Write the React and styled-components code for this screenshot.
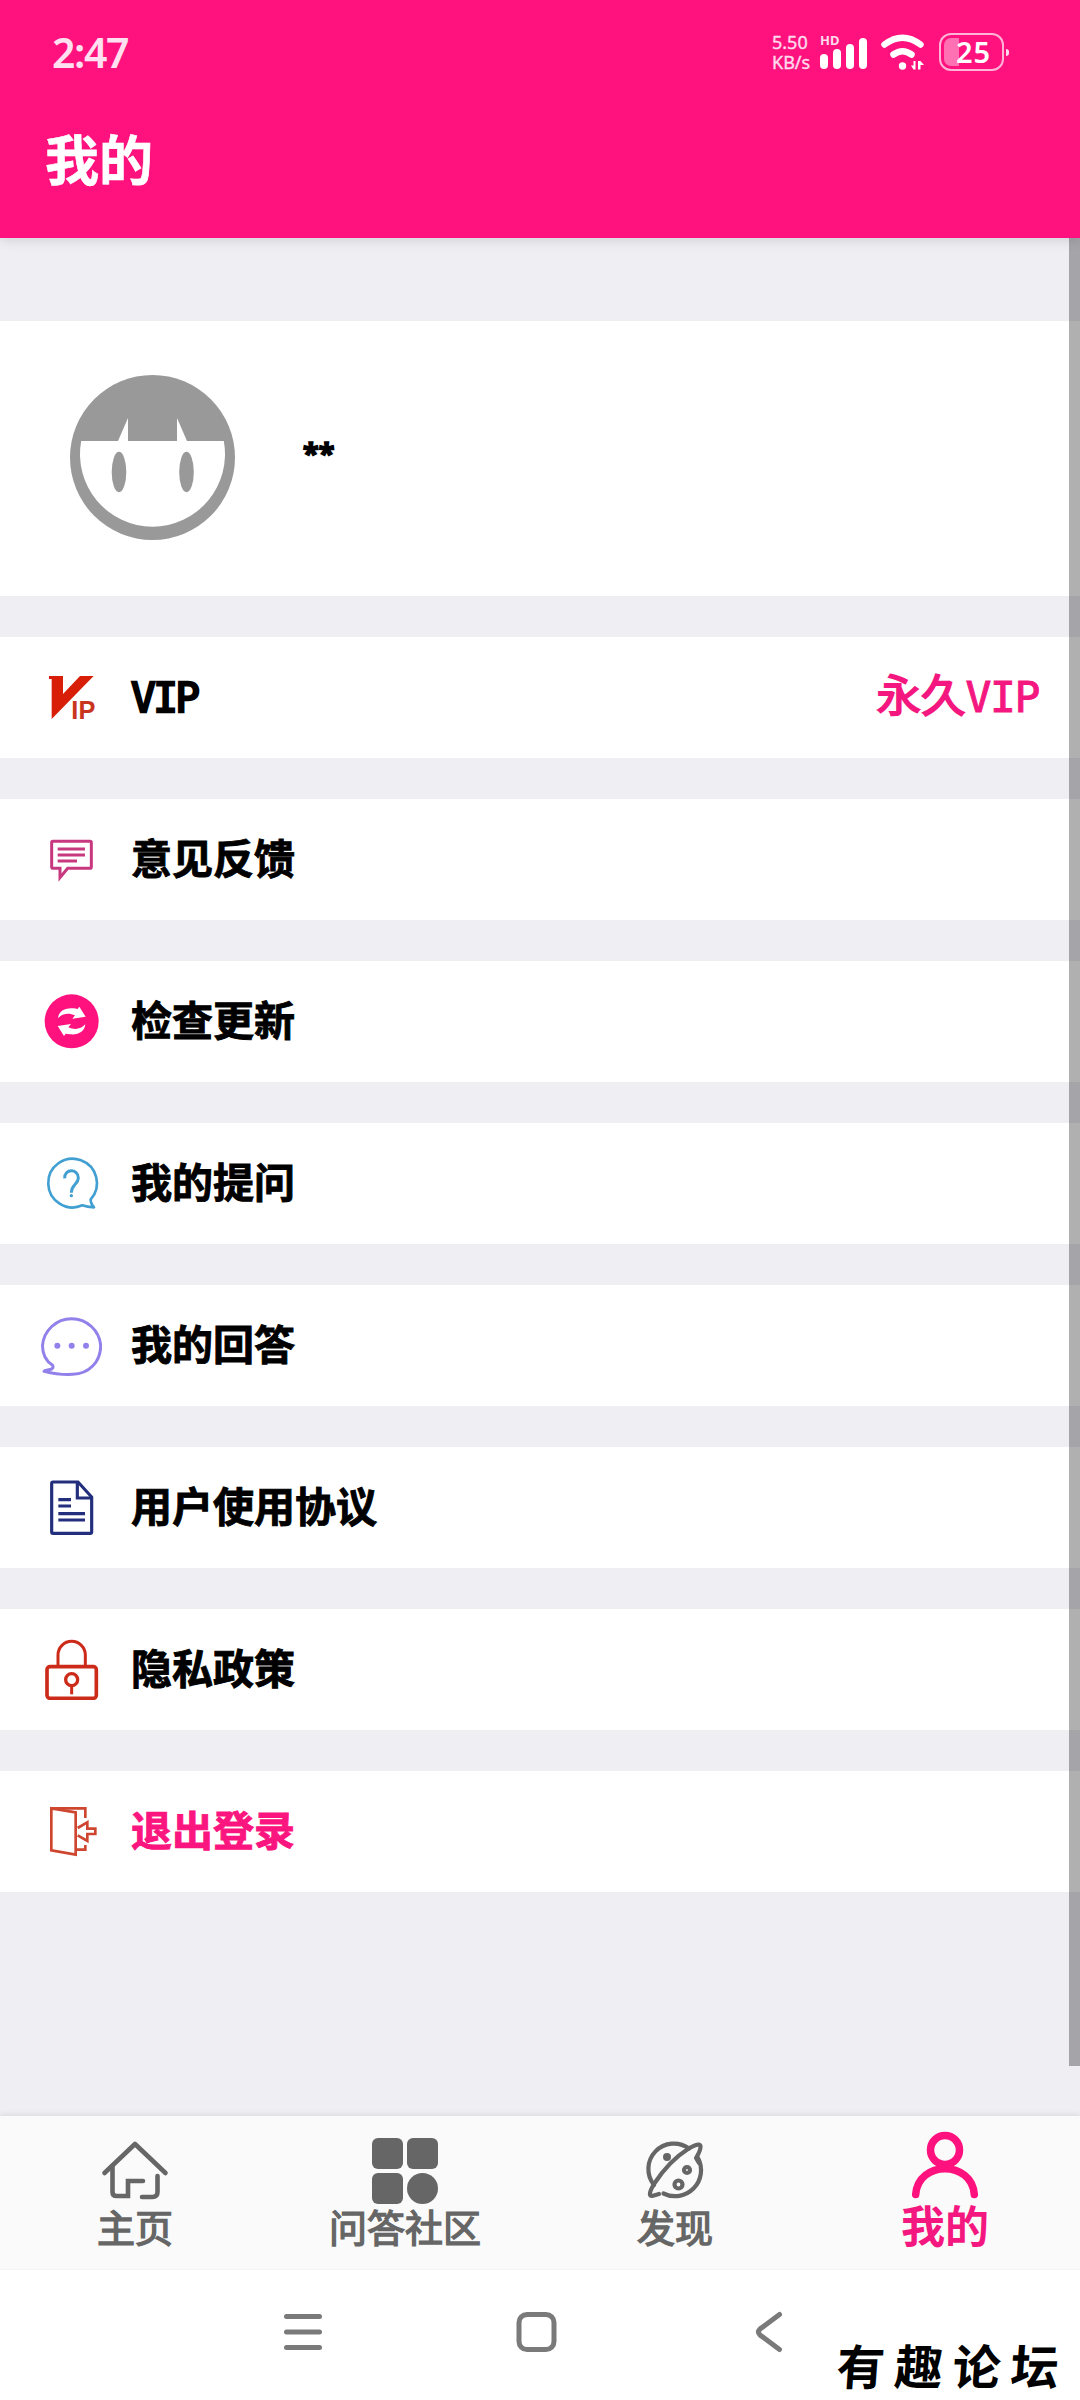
import React from 'react';
import styled, { createGlobalStyle } from 'styled-components';

const PINK = '#ff127e';

const GlobalStyle = createGlobalStyle`
  * {
    box-sizing: border-box;
  }

  body {
    margin: 0;
    background: #efeef3;
    font-family: "Noto Sans CJK SC", "Noto Sans", sans-serif;
  }
`;

/* ---------- Row icons ---------- */

const VipIcon = () => (
  <RowIcon viewBox="0 0 183 183">
    <path d="M24 27H66V81L117 27H158L32 156V36H24Z" fill="#d81e06" />
    <text
      x="91"
      y="156"
      fontSize="76"
      fontWeight="700"
      fontFamily="Liberation Sans, sans-serif"
      textLength="72"
      fill="#c9341f"
    >
      IP
    </text>
  </RowIcon>
);

const FeedbackIcon = () => (
  <RowIcon viewBox="0 0 183 183" fill="none" stroke="#c8387f" strokeWidth="9">
    <path d="M36 37H147Q151 37 151 41V114Q151 118 147 118H80L57 146V118H36Q32 118 32 114V41Q32 37 36 37Z" />
    <path d="M50 60H132M50 78H132M50 96H108" />
  </RowIcon>
);

const UpdateIcon = () => (
  <RowIcon viewBox="0 0 183 183">
    <circle cx="92" cy="91" r="81" fill={PINK} />
    <g fill="#fff">
      <path d="M51 82C53 61 70 50 96 52Q104 53 110 54L115 47L134 77L94 83L102 73C84 65 65 66 51 82Z" />
      <path
        d="M51 82C53 61 70 50 96 52Q104 53 110 54L115 47L134 77L94 83L102 73C84 65 65 66 51 82Z"
        transform="rotate(180 92 91)"
      />
    </g>
  </RowIcon>
);

const AskIcon = () => (
  <RowIcon viewBox="0 0 183 183" fill="none" stroke="#429fd2" strokeWidth="8">
    <path d="M124 157A73 73 0 1 1 149 139Q148 150 159 163Q138 162 124 157Z" strokeLinejoin="round" />
    <path d="M71 76C69 46 112 46 112 75C112 94 91 94 91 119" strokeWidth="9" />
    <circle cx="91" cy="128" r="5" fill="#429fd2" stroke="none" />
  </RowIcon>
);

const AnswerIcon = () => (
  <RowIcon viewBox="0 0 183 183" fill="none" stroke="#9281ea" strokeWidth="9">
    <path
      d="M35 151C15 138 4.500 115 4.500 92A87.500 87.500 0 0 1 179 92C179 140 145 176 95 178C65 180 38 176 9 169C12 163 42 168 35 151Z"
      strokeLinejoin="round"
    />
    <g fill="#9281ea" stroke="none">
      <circle cx="49" cy="92" r="9" />
      <circle cx="92" cy="92" r="9" />
      <circle cx="135" cy="92" r="9" />
    </g>
  </RowIcon>
);

const AgreementIcon = () => (
  <RowIcon viewBox="0 0 183 183" fill="none" stroke="#232f7c" strokeWidth="9.5">
    <path d="M36 15H111L152 60V165Q152 169 148 169H36Q32 169 32 165V19Q32 15 36 15Z" />
    <path d="M109 15V63H152" />
    <path d="M52 68H90M52 87H90M52 110H132M52 129H132" />
  </RowIcon>
);

const LockIcon = () => (
  <RowIcon viewBox="0 0 183 183" fill="none" stroke="#cc2b1a" strokeWidth="9">
    <path d="M51 81V48A41 41 0 0 1 133 48V81" />
    <rect x="18" y="83" width="148" height="95" rx="9" strokeWidth="11" />
    <circle cx="92" cy="122" r="18" strokeWidth="10" />
    <path d="M92 140V166" />
  </RowIcon>
);

const LogoutIcon = () => (
  <RowIcon viewBox="0 0 183 183" fill="none" stroke="#cf4630" strokeWidth="8">
    <path d="M31 22L104 34V161L31 148Z" />
    <path d="M31 22H133V51M104 146H133V132" />
    <path d="M110 81L139 64V83H163V99H139V120L110 103" />
  </RowIcon>
);

/* ---------- Tab icons ---------- */

const HomeIcon = () => (
  <TabIcon viewBox="0 0 80 80" fill="none" stroke="#666" strokeWidth="4.6" strokeLinecap="round">
    <path d="M9.5 45L40 16L70.500 45" strokeLinejoin="round" />
    <path d="M17.500 38V64Q17.500 68 21.500 68H33V53H48" />
    <path d="M62.500 48V64Q62.500 69 57.500 69H47" />
  </TabIcon>
);

const CommunityIcon = () => (
  <TabIcon viewBox="0 0 80 80" fill="#666">
    <rect x="7" y="10" width="31" height="31" rx="6" />
    <rect x="42" y="10" width="31" height="31" rx="6" />
    <rect x="7" y="45" width="31" height="31" rx="6" />
    <circle cx="57.5" cy="60.500" r="15.500" />
  </TabIcon>
);

const DiscoverIcon = () => (
  <TabIcon viewBox="0 0 80 80" fill="none" stroke="#666" strokeWidth="4.200" strokeLinecap="round" strokeLinejoin="round">
    <path d="M54 20.500A25.500 25.500 0 0 0 19 57" />
    <path d="M28.500 65.500A26 26 0 0 0 63 30" />
    <path d="M24 66L17 68Q12 68 19 56Q34 33 53 21Q65 14 65.500 18Q66 22 61 30L64 35" />
    <circle cx="32" cy="29" r="4" fill="#666" strokeWidth="0" />
    <circle cx="52" cy="42" r="3" />
    <circle cx="43.500" cy="56.500" r="4" />
  </TabIcon>
);

const MineIcon = () => (
  <TabIcon viewBox="0 0 80 80" fill="none" stroke={PINK} strokeWidth="7.500" strokeLinecap="round">
    <circle cx="40" cy="22" r="14.500" />
    <path d="M10.700 66.500C13 32 67 32 69.300 66.500" />
  </TabIcon>
);

const rows = [
  { label: 'VIP', icon: VipIcon, latin: true, value: true },
  { label: '意见反馈', icon: FeedbackIcon },
  { label: '检查更新', icon: UpdateIcon },
  { label: '我的提问', icon: AskIcon },
  { label: '我的回答', icon: AnswerIcon },
  { label: '用户使用协议', icon: AgreementIcon },
  { label: '隐私政策', icon: LockIcon },
  { label: '退出登录', icon: LogoutIcon, danger: true },
];

const tabs = [
  { label: '主页', icon: HomeIcon },
  { label: '问答社区', icon: CommunityIcon },
  { label: '发现', icon: DiscoverIcon },
  { label: '我的', icon: MineIcon, active: true },
];

const StatusBar = () => (
  <StatusRow>
    <Clock>2:47</Clock>
    <StatusRight>
      <NetSpeed>
        <span>5.50</span>
        <span>KB/s</span>
      </NetSpeed>
      <Signal>
        <HdTag>HD</HdTag>
        <SignalBar $h={15} />
        <SignalBar $h={20} />
        <SignalBar $h={25} />
        <SignalBar $h={31} />
      </Signal>
      <svg width="44" height="36" viewBox="0 0 44 36">
        <g fill="none" stroke="#fff" strokeWidth="6.500" strokeLinecap="round">
          <path d="M3.500 10.500Q21.500 -3 39.500 10.500" />
          <path d="M12.500 20.500Q21.500 14 30.500 20.500" />
        </g>
        <circle cx="21.500" cy="32" r="3.700" fill="#fff" />
        <path d="M34.500 27V35.500H32.500L30 31.500H32.500V27ZM37 35.500V27H39.500L43 31H39.500V35.500Z" fill="#fff" />
      </svg>
      <BatteryWrap>
        <Battery>
          <BatteryFill />
          <BatteryText>25</BatteryText>
        </Battery>
        <BatteryTip />
      </BatteryWrap>
    </StatusRight>
  </StatusRow>
);

const App = () => {
  return (
    <Page>
      <GlobalStyle />

      <Header>
        <StatusBar />
        <Title>我的</Title>
      </Header>

      <Content>
        <Profile>
          <svg width="165" height="165" viewBox="0 0 165 165">
            <circle cx="82.500" cy="82.500" r="82.500" fill="#999" />
            <path d="M11.200 66H48L58 43V66H107V43L117 66H153.800A72.500 72.500 0 1 1 11.200 66Z" fill="#fff" />
            <ellipse cx="49" cy="97" rx="7.300" ry="20.300" fill="#999" />
            <ellipse cx="116.500" cy="97" rx="7.300" ry="20.300" fill="#999" />
          </svg>
          <UserName>**</UserName>
        </Profile>

        {rows.map(({ label, icon: Icon, latin, value, danger }) => (
          <Row key={label}>
            <Icon />
            <RowLabel $latin={latin} $danger={danger}>{label}</RowLabel>
            {value && (
              <RowValue>
                永久<span>VIP</span>
              </RowValue>
            )}
          </Row>
        ))}

        <ScrollThumb />
      </Content>

      <TabBar>
        {tabs.map(({ label, icon: Icon, active }) => (
          <Tab key={label} $active={active}>
            <Icon />
            <span>{label}</span>
          </Tab>
        ))}
      </TabBar>

      <SystemNav>
        <svg width="40" height="42" viewBox="0 0 40 42" stroke="#7a7a7a" strokeWidth="5" strokeLinecap="round">
          <path d="M3.500 5.500H36.500M3.500 21H36.500M3.500 36.500H36.500" />
        </svg>
        <svg width="42" height="42" viewBox="0 0 42 42" fill="none" stroke="#7a7a7a" strokeWidth="5">
          <rect x="3" y="3.500" width="35" height="35" rx="8" />
        </svg>
        <svg width="40" height="42" viewBox="0 0 40 42" fill="none" stroke="#7a7a7a" strokeWidth="5" strokeLinecap="round">
          <path d="M29.500 3.500L10 18Q7 21 10 24L29.500 38.500" />
        </svg>
        <Watermark>有趣论坛</Watermark>
      </SystemNav>
    </Page>
  );
};

const Page = styled.div`
  width: 1080px;
  height: 2400px;
  display: flex;
  flex-direction: column;
  overflow: hidden;
  background: #efeef3;
`;

const Header = styled.header`
  position: relative;
  z-index: 1;
  flex: none;
  height: 238px;
  background: ${PINK};
  color: #fff;
  box-shadow: 0 2px 12px rgba(0, 0, 0, 0.13);
`;

const StatusRow = styled.div`
  height: 104px;
  padding: 0 71px 0 52px;
  display: flex;
  align-items: center;
  justify-content: space-between;
`;

const Clock = styled.div`
  font-family: "Noto Sans", sans-serif;
  font-size: 41px;
  font-weight: 600;
  letter-spacing: -1.4px;
  color: #ffe0f0;
`;

const StatusRight = styled.div`
  display: flex;
  align-items: center;
`;

const NetSpeed = styled.div`
  width: 48px;
  display: flex;
  flex-direction: column;
  font-family: "Noto Sans", sans-serif;
  font-size: 18px;
  line-height: 20px;
  color: #ffd9ec;
  -webkit-text-stroke: 0.4px currentColor;
  white-space: nowrap;
`;

const Signal = styled.div`
  position: relative;
  width: 47px;
  height: 34px;
  margin-right: 14px;
  display: flex;
  align-items: flex-end;
  gap: 5px;
`;

const HdTag = styled.span`
  position: absolute;
  top: 0;
  left: 0;
  font-family: "Noto Sans", sans-serif;
  font-size: 13px;
  line-height: 11px;
  font-weight: 700;
  color: #ffd9ec;
`;

const SignalBar = styled.i`
  width: 8px;
  height: ${({ $h }) => $h}px;
  border-radius: 4px;
  background: #fff;
`;

const BatteryWrap = styled.div`
  margin-left: 14px;
  display: flex;
  align-items: center;
  gap: 2px;
`;

const Battery = styled.div`
  position: relative;
  width: 65px;
  height: 38px;
  border: 2px solid #ffb3d7;
  border-radius: 12px;
  display: flex;
  align-items: center;
  padding: 0 3px;
`;

const BatteryFill = styled.div`
  width: 15px;
  height: 28px;
  border-radius: 7px 0 0 7px;
  background: #ff71b2;
`;

const BatteryText = styled.span`
  position: absolute;
  inset: 0;
  padding-left: 4px;
  text-align: center;
  font-family: "Noto Sans", sans-serif;
  font-size: 29px;
  line-height: 34px;
  font-weight: 600;
  letter-spacing: 1px;
`;

const BatteryTip = styled.div`
  width: 3px;
  height: 7px;
  border-radius: 0 3px 3px 0;
  background: #ffd9ec;
`;

const Title = styled.h1`
  margin: 0;
  padding-left: 45px;
  font-size: 54px;
  line-height: 108px;
  font-weight: 700;
  -webkit-text-stroke: 0.6px currentColor;
`;

const Content = styled.main`
  position: relative;
  height: 1878px;
  padding-top: 83px;
  display: flex;
  flex-direction: column;
  gap: 41px;
`;

const Profile = styled.section`
  height: 275px;
  padding: 0 0 2px 69.500px;
  display: flex;
  align-items: center;
  gap: 68.500px;
  background: #fff;
`;

const UserName = styled.span`
  padding-bottom: 11px;
  font-family: "Noto Sans", sans-serif;
  font-size: 29px;
  font-weight: 800;
  -webkit-text-stroke: 1.4px #000;
`;

const Row = styled.div`
  height: 121px;
  padding: 0 41px;
  display: flex;
  align-items: center;
  background: #fff;
`;

const RowIcon = styled.svg`
  flex: none;
  width: 61px;
  height: 61px;
`;

const RowLabel = styled.span`
  margin-left: 29px;
  padding-bottom: 8px;
  font-size: 41px;
  line-height: 60px;
  font-weight: 700;
  color: ${({ $danger }) => ($danger ? '#fb157f' : '#000')};
  -webkit-text-stroke: 0.9px currentColor;

  ${({ $latin }) =>
    $latin &&
    `
    padding-bottom: 0;
    font-family: "DejaVu Sans Mono", monospace;
    font-size: 41px;
    font-weight: 400;
    letter-spacing: -2.5px;
    -webkit-text-stroke: 2.4px currentColor;
  `}
`;

const RowValue = styled.span`
  margin-left: auto;
  padding-bottom: 6px;
  font-size: 44.5px;
  line-height: 60px;
  color: #f4177f;
  -webkit-text-stroke: 1.8px currentColor;

  span {
    font-family: "DejaVu Sans Mono", monospace;
    font-size: 43px;
    letter-spacing: -1.4px;
    -webkit-text-stroke: 1px currentColor;
  }
`;

const ScrollThumb = styled.div`
  position: absolute;
  top: 0;
  right: 0;
  width: 11px;
  height: 1828px;
  background: rgba(0, 0, 0, 0.31);
`;

const TabBar = styled.nav`
  flex: none;
  height: 154px;
  display: grid;
  grid-template-columns: repeat(4, 1fr);
  background: #fafafa;
  border-bottom: 1px solid #f4f4f4;
  box-shadow: 0 -1px 6px rgba(0, 0, 0, 0.1);
`;

const Tab = styled.div`
  padding-top: 12px;
  display: flex;
  flex-direction: column;
  align-items: center;
  font-size: ${({ $active }) => ($active ? 44 : 38)}px;
  line-height: ${({ $active }) => ($active ? 32 : 36)}px;
  font-weight: ${({ $active }) => ($active ? 700 : 400)};
  color: ${({ $active }) => ($active ? '#f4177f' : '#666')};
  -webkit-text-stroke: ${({ $active }) => ($active ? 0 : 1.4)}px currentColor;
`;

const TabIcon = styled.svg`
  flex: none;
  width: 80px;
  height: 80px;
`;

const SystemNav = styled.footer`
  position: relative;
  flex: none;
  height: 130px;
  padding: 41px 290px 0 283px;
  display: flex;
  justify-content: space-between;
  background: #fff;
`;

const Watermark = styled.span`
  position: absolute;
  right: 11px;
  bottom: 6px;
  font-size: 48px;
  line-height: 60px;
  font-weight: 700;
  letter-spacing: 10px;
  color: #000;
  transform: skewX(-4deg);
`;

export default App;
